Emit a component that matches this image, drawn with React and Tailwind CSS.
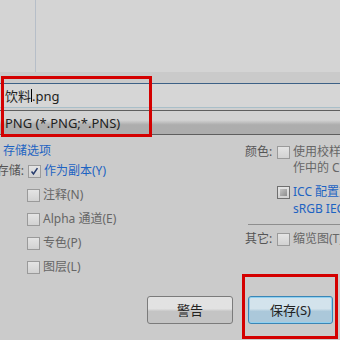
import React from 'react';

const font = { fontFamily: '"Noto Sans", "Noto Sans CJK SC", sans-serif' };

const Box = ({ checked, dark }) => (
  <span
    className={`relative inline-block h-[13px] w-[13px] shrink-0 border bg-gradient-to-b from-[#e4e4e4] to-[#d2d2d2] ${
      dark ? 'border-[#6f6f6f]' : 'border-[#9a9a9a]'
    }`}
  >
    {dark && <span className="absolute inset-[2px] bg-gradient-to-br from-[#c4c4c4] to-[#8e8e8e]" />}
    {checked && (
      <svg viewBox="0 0 13 13" className="absolute inset-0 h-full w-full">
        <path d="M3 6.5 L5.3 9.5 L10 2.5" fill="none" stroke="#283d6e" strokeWidth="1.8" />
      </svg>
    )}
  </span>
);

const leftRows = [
  { text: '注释(N)' },
  { text: 'Alpha 通道(E)' },
  { text: '专色(P)' },
  { text: '图层(L)' }
];

const App = () => (
  <div className="relative h-[340px] w-[340px] overflow-hidden bg-[#cbcbcb] text-[12px] leading-[16px] text-[#555]" style={font}>
    <div className="h-[72px] bg-[#d4d4d4]">
      <div className="ml-[35px] h-full w-px bg-[#b6bec8]" />
    </div>
    <div className="h-[11px] bg-[#cacaca]" />

    <div className="flex h-[25px] items-center border-t border-[#3d6186] border-b border-b-[#a9bfc9] bg-[#d6d6d6] pl-[5px] text-[13px] text-[#222]">
      <span>饮料</span>
      <span className="inline-block h-[13px] w-px bg-black" />
      <span>.png</span>
    </div>
    <div className="h-[2px] bg-[#cfcfcf]" />
    <div className="flex h-[25px] items-center border-y border-[#5e5e5e] bg-gradient-to-b from-[#d2d2d2] from-40% to-[#adadad] to-60% pl-[5px] text-[13px] text-[#222]">
      PNG (*.PNG;*.PNS)
    </div>

    <div className="flex">
      <div className="w-[245px] shrink-0">
        <div className="mt-[8px] pl-[3px] text-[#1d63c2]">存储选项</div>
        <div className="flex h-[24px] items-center">
          <div className="flex w-[24px] justify-end whitespace-nowrap">存储:</div>
          <div className="ml-[4px] flex items-center gap-[3px]">
            <Box checked />
            <span className="text-[#1d63c2]">作为副本(Y)</span>
          </div>
        </div>
        {leftRows.map((row) => (
          <div key={row.text} className="ml-[27px] flex h-[24px] items-center gap-[3px] text-[#666]">
            <Box />
            <span>{row.text}</span>
          </div>
        ))}
      </div>

      <div className="flex-1 whitespace-nowrap">
        <div className="mt-[9px] flex items-start">
          <span className="w-[32px]">颜色:</span>
          <span className="mt-[2px] mr-[3px]">
            <Box />
          </span>
          <div className="text-[#666]">
            <div>使用校样设置</div>
            <div>作中的 CMYK</div>
          </div>
        </div>
        <div className="mt-[8px] ml-[32px] flex items-start">
          <span className="mt-[2px] mr-[3px]">
            <Box dark />
          </span>
          <div className="text-[#1d63c2]">
            <div>ICC 配置文件(C):</div>
            <div className="mt-px">sRGB IEC61966-2.1</div>
          </div>
        </div>
        <div className="mt-[7px] ml-[3px] h-px bg-[#8e8e8e]" />
        <div className="mt-[6px] flex items-center">
          <span className="w-[32px]">其它:</span>
          <Box />
          <span className="ml-[3px] text-[#666]">缩览图(T)</span>
        </div>
      </div>
    </div>

    <div className="mt-[17px] flex gap-[15px] pl-[147px] text-[13px] text-[#222]">
      <div className="flex h-[28px] w-[86px] items-center justify-center rounded-[3px] border border-[#7b7b7b] bg-gradient-to-b from-[#e2e2e2] from-45% to-[#c4c4c4] to-55%">
        警告
      </div>
      <div className="flex h-[28px] w-[85px] items-center justify-center rounded-[3px] border border-[#3b86b6] bg-gradient-to-b from-[#d3e3ec] from-45% to-[#abc8da] to-55% shadow-[inset_0_0_0_1px_#8fd0f0]">
        保存(S)
      </div>
    </div>

    <div className="absolute left-[1px] top-[76px] h-[61px] w-[151px] border-[3px] border-[#d40000]" />
    <div className="absolute left-[242px] top-[274px] h-[65px] w-[96px] border-[3px] border-[#d40000]" />
  </div>
);

export default App;
